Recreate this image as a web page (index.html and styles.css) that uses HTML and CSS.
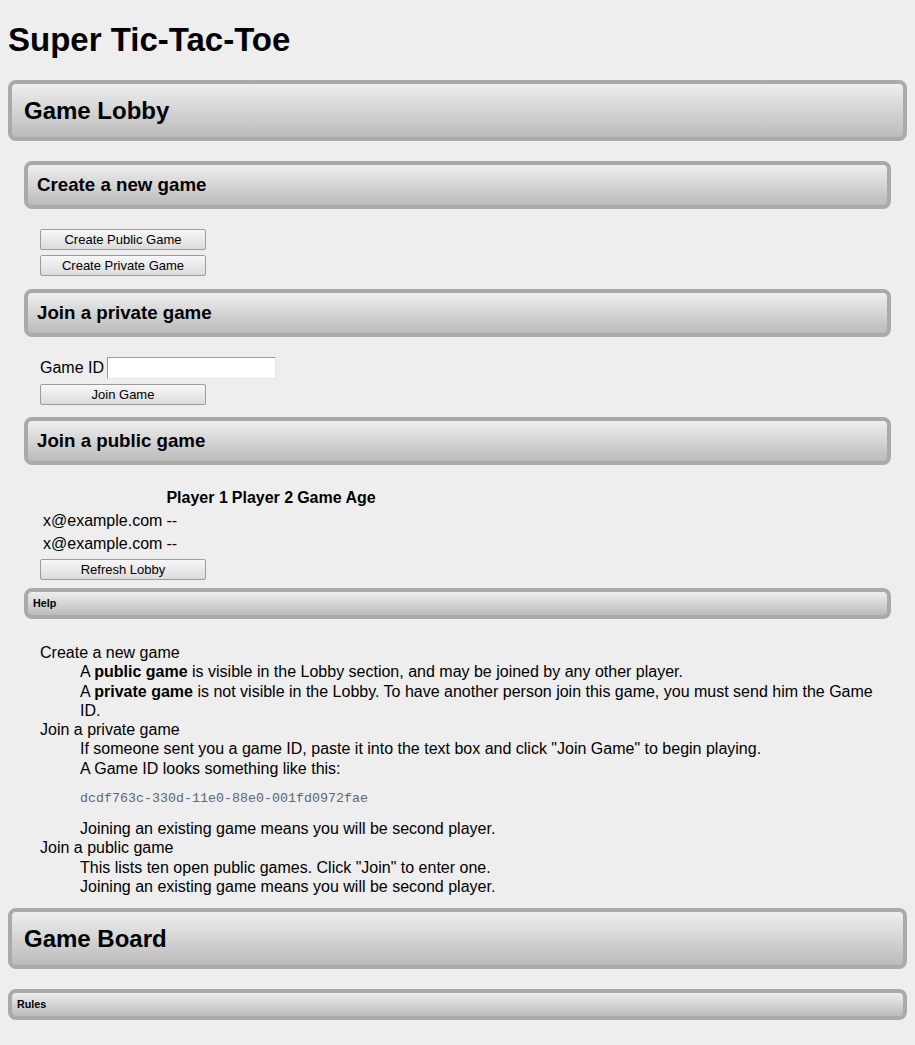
FILE: index.html
```html
<!DOCTYPE html>
<html>
<head>
<meta charset="utf-8">
<title>Super Tic-Tac-Toe</title>
<link rel="stylesheet" href="styles.css">
</head>
<body>
<h1 class="title">Super Tic-Tac-Toe</h1>

<h2 class="bar bar-l">Game Lobby</h2>
<div class="lobby">
  <h3 class="bar bar-m">Create a new game</h3>
  <div class="stack stack-create">
    <button class="btn">Create Public Game</button>
    <button class="btn">Create Private Game</button>
  </div>

  <h3 class="bar bar-m">Join a private game</h3>
  <div class="stack stack-join">
    <div class="id-row"><label class="id-label">Game ID</label><input class="id-input" type="text"></div>
    <button class="btn">Join Game</button>
  </div>

  <h3 class="bar bar-m">Join a public game</h3>
  <div class="stack stack-public">
    <table class="games">
      <tr><th></th><th>Player 1</th><th>Player 2</th><th>Game Age</th></tr>
      <tr><td>x@example.com</td><td>--</td><td></td><td></td></tr>
      <tr><td>x@example.com</td><td>--</td><td></td><td></td></tr>
    </table>
    <button class="btn btn-refresh">Refresh Lobby</button>
  </div>

  <h6 class="bar bar-s">Help</h6>
  <dl class="help">
    <dt>Create a new game</dt>
    <dd>A <b>public game</b> is visible in the Lobby section, and may be joined by any other player.</dd>
    <dd>A <b>private game</b> is not visible in the Lobby. To have another person join this game, you must send him the Game ID.</dd>
    <dt>Join a private game</dt>
    <dd>If someone sent you a game ID, paste it into the text box and click "Join Game" to begin playing.</dd>
    <dd>A Game ID looks something like this:
      <pre class="code">dcdf763c-330d-11e0-88e0-001fd0972fae</pre>
      Joining an existing game means you will be second player.</dd>
    <dt>Join a public game</dt>
    <dd>This lists ten open public games. Click "Join" to enter one.</dd>
    <dd>Joining an existing game means you will be second player.</dd>
  </dl>
</div>

<h2 class="bar bar-l">Game Board</h2>
<h6 class="bar bar-s">Rules</h6>
</body>
</html>
```

FILE: styles.css
```css
html, body {
  background: #eeeeee;
}
body {
  margin: 0;
  padding: 21px 8px 20px;
  font-family: "Liberation Sans", Arial, sans-serif;
  font-size: 16px;
  color: #000;
}
.title {
  margin: 0 0 22px;
  font-size: 33px;
  line-height: 37px;
  font-weight: bold;
}
.bar {
  margin: 0;
  border: 4px solid #aaaaaa;
  border-radius: 8px;
  background: linear-gradient(to bottom, #eeeeee, #bbbbbb);
  font-weight: bold;
  color: #000;
}
.bar-l {
  font-size: 24px;
  line-height: 29px;
  padding: 12px 12px;
  margin-bottom: 20px;
}
.bar-m {
  font-size: 18.72px;
  line-height: 22px;
  padding: 9px 9px;
  margin-bottom: 20px;
}
.bar-s {
  font-size: 10.72px;
  line-height: 13px;
  padding: 5px 5px;
}
.lobby {
  margin: 0 16px 12px;
}
.stack {
  padding-left: 16px;
  display: flex;
  flex-direction: column;
  align-items: flex-start;
  gap: 5px;
}
.stack-create {
  margin-top: 2px;
  margin-bottom: 13px;
}
.stack-join {
  margin-bottom: 12px;
}
.stack-public {
  margin-top: 0;
  gap: 3px;
  margin-bottom: 8px;
}
.btn {
  box-sizing: border-box;
  width: 166px;
  height: 21px;
  padding: 0;
  margin: 0;
  border: 1px solid #9c9c9c;
  border-radius: 2px;
  background: linear-gradient(to bottom, #f7f7f7, #dcdcdc);
  font-family: "Liberation Sans", Arial, sans-serif;
  font-size: 13px;
  color: #000;
  text-align: center;
}
.id-row {
  display: flex;
  align-items: center;
  gap: 3px;
  height: 22px;
}
.id-label {
  font-size: 16px;
}
.id-input {
  box-sizing: border-box;
  width: 169px;
  height: 22px;
  margin: 0;
  padding: 0 2px;
  background: #fff;
  border-top: 1px solid #9a9a9a;
  border-left: 1px solid #9a9a9a;
  border-right: 1px solid #e6e6e6;
  border-bottom: 1px solid #e6e6e6;
  font-family: "Liberation Sans", Arial, sans-serif;
  font-size: 13px;
}
.games {
  border-spacing: 2px;
  font-size: 16px;
  line-height: 19px;
}
.games th, .games td {
  padding: 1px;
  text-align: left;
}
.games th {
  font-weight: bold;
}
.help {
  margin: 24px 0 0;
  padding-left: 16px;
  line-height: 19.3px;
}
.help dt {
  margin: 0;
}
.help dd {
  margin: 0 0 0 40px;
}
.code {
  margin: 12px 0;
  font-family: "Liberation Mono", "Courier New", monospace;
  font-size: 13.33px;
  line-height: 17px;
  color: #5d6873;
}
```
